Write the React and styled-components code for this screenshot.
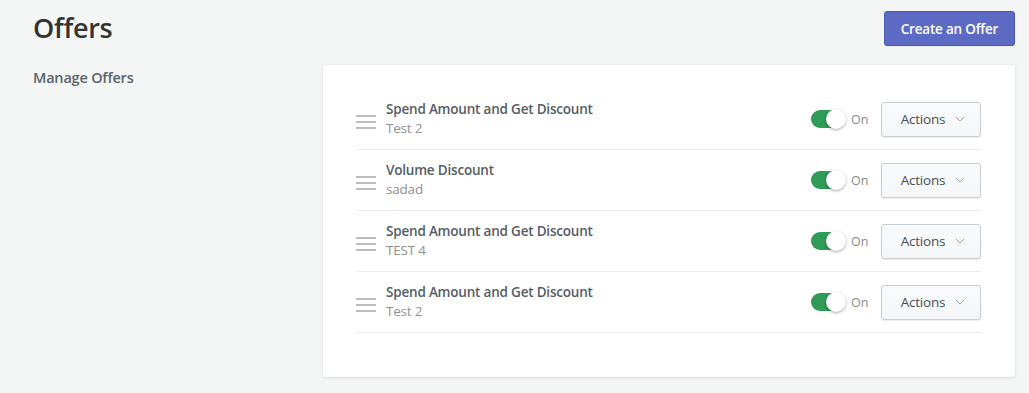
import React from "react";
import styled, { createGlobalStyle } from "styled-components";

const Global = createGlobalStyle`
  html, body { margin: 0; padding: 0; background: #f4f6f6; }
  body { font-family: "Open Sans", "Noto Sans", sans-serif; color: #333; }
  * { box-sizing: border-box; }
`;

const Page = styled.div`
  padding: 11px 14px 16px 33px;
`;

const Header = styled.header`
  display: flex;
  align-items: flex-start;
  justify-content: space-between;
  height: 54px;
`;

const Title = styled.h1`
  margin: 0;
  padding-top: 0;
  font-size: 27px;
  line-height: 34px;
  font-weight: 600;
  color: #333;
  letter-spacing: -0.3px;
`;

const PrimaryButton = styled.button`
  width: 131px;
  height: 35px;
  border: 1px solid #4b59b3;
  border-radius: 3px;
  background: #5c6ac4;
  color: #fff;
  font-family: inherit;
  font-size: 13.5px;
  font-weight: 600;
  letter-spacing: -0.2px;
  box-shadow: 0 1px 0 rgba(22, 29, 37, 0.05);
  cursor: pointer;
`;

const Content = styled.div`
  display: flex;
  align-items: flex-start;
`;

const Aside = styled.div`
  width: 290px;
  flex: none;
  padding-top: 3px;
  font-size: 14.5px;
  font-weight: 600;
  color: #5a626b;
  letter-spacing: -0.2px;
`;

const Card = styled.section`
  flex: 1;
  background: #fff;
  border-radius: 3px;
  box-shadow: 0 0 0 1px rgba(63, 63, 68, 0.03), 0 1px 3px 0 rgba(63, 63, 68, 0.1);
  padding: 24px 34px 44px 33px;
`;

const Row = styled.div`
  display: flex;
  align-items: center;
  height: 61px;
  border-bottom: 1px solid #ebebeb;
`;

const Handle = styled.div`
  width: 20px;
  margin-right: 10px;
  display: flex;
  flex-direction: column;
  gap: 4px;
  padding-top: 6px;
  & > span {
    display: block;
    height: 2px;
    background: #bdbdbd;
  }
`;

const Texts = styled.div`
  flex: 1;
  display: flex;
  flex-direction: column;
  line-height: 19px;
  letter-spacing: -0.2px;
`;

const OfferName = styled.div`
  font-size: 13.5px;
  font-weight: 600;
  color: #555d66;
`;

const OfferSub = styled.div`
  font-size: 13.5px;
  color: #919191;
`;

const Toggle = styled.div`
  position: relative;
  width: 34px;
  height: 18px;
  border-radius: 9px;
  background: ${(p) => (p.$on ? "#2e9b56" : "#c4cdd5")};
  &::after {
    content: "";
    position: absolute;
    top: -1px;
    left: ${(p) => (p.$on ? "15px" : "-1px")};
    width: 20px;
    height: 20px;
    border-radius: 50%;
    background: #fff;
    box-shadow: 0 1px 3px rgba(0, 0, 0, 0.35);
  }
`;

const ToggleLabel = styled.span`
  margin-left: 6px;
  font-size: 12.5px;
  color: #8a8a8a;
  width: 30px;
`;

const ActionsButton = styled.button`
  display: flex;
  align-items: center;
  justify-content: center;
  gap: 10px;
  width: 100px;
  height: 35px;
  border: 1px solid #c9cdd2;
  border-radius: 3px;
  background: linear-gradient(#f9fafb, #f4f6f8);
  box-shadow: 0 1px 1px rgba(22, 29, 37, 0.08);
  font-family: inherit;
  font-size: 13.5px;
  color: #454f5b;
  letter-spacing: -0.2px;
  padding: 0 0 0 4px;
  cursor: pointer;
`;

const Chevron = () => (
  <svg width="10" height="6" viewBox="0 0 10 6" fill="none">
    <path d="M1 1l4 4 4-4" stroke="#9aa3ad" strokeWidth="1" />
  </svg>
);

const offers = [
  { name: "Spend Amount and Get Discount", sub: "Test 2" },
  { name: "Volume Discount", sub: "sadad" },
  { name: "Spend Amount and Get Discount", sub: "TEST 4" },
  { name: "Spend Amount and Get Discount", sub: "Test 2" },
];

export default function App() {
  return (
    <Page>
      <Global />
      <Header>
        <Title>Offers</Title>
        <PrimaryButton>Create an Offer</PrimaryButton>
      </Header>
      <Content>
        <Aside>Manage Offers</Aside>
        <Card>
          {offers.map((o, i) => (
            <Row key={i}>
              <Handle>
                <span />
                <span />
                <span />
              </Handle>
              <Texts>
                <OfferName>{o.name}</OfferName>
                <OfferSub>{o.sub}</OfferSub>
              </Texts>
              <Toggle $on />
              <ToggleLabel>On</ToggleLabel>
              <ActionsButton>
                Actions
                <Chevron />
              </ActionsButton>
            </Row>
          ))}
        </Card>
      </Content>
    </Page>
  );
}
